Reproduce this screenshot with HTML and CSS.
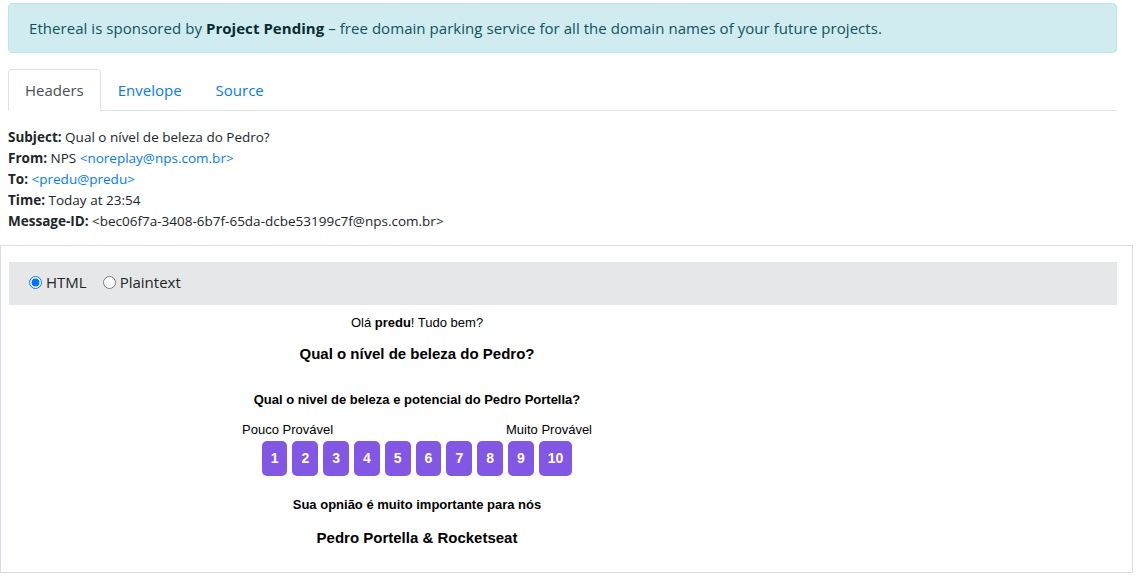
FILE: index.html
```html
<!DOCTYPE html>
<html lang="pt">
<head>
<meta charset="utf-8">
<title>Ethereal message</title>
<link rel="stylesheet" href="styles.css">
</head>
<body>
<div class="page">
  <div class="alert">Ethereal is sponsored by <strong>Project Pending</strong> – free domain parking service for all the domain names of your future projects.</div>
  <ul class="tabs">
    <li class="tab active">Headers</li>
    <li class="tab">Envelope</li>
    <li class="tab">Source</li>
  </ul>
  <div class="headers">
    <div class="hline"><strong>Subject:</strong> Qual o nível de beleza do Pedro?</div>
    <div class="hline"><strong>From:</strong> NPS <a class="link">&lt;noreplay@nps.com.br&gt;</a></div>
    <div class="hline"><strong>To:</strong> <a class="link">&lt;predu@predu&gt;</a></div>
    <div class="hline"><strong>Time:</strong> Today at 23:54</div>
    <div class="hline"><strong>Message-ID:</strong> &lt;bec06f7a-3408-6b7f-65da-dcbe53199c7f@nps.com.br&gt;</div>
  </div>
</div>
<div class="frame">
  <div class="viewbar">
    <label class="opt"><input type="radio" name="view" checked> HTML</label>
    <label class="opt"><input type="radio" name="view"> Plaintext</label>
  </div>
  <div class="mail">
    <p class="greet">Olá <strong>predu</strong>! Tudo bem?</p>
    <h1 class="title">Qual o nível de beleza do Pedro?</h1>
    <h3 class="question">Qual o nivel de beleza e potencial do Pedro Portella?</h3>
    <div class="scale-labels"><span>Pouco Provável</span><span>Muito Provável</span></div>
    <div class="scale">
      <a class="btn">1</a><a class="btn">2</a><a class="btn">3</a><a class="btn">4</a><a class="btn">5</a><a class="btn">6</a><a class="btn">7</a><a class="btn">8</a><a class="btn">9</a><a class="btn">10</a>
    </div>
    <p class="note">Sua opnião é muito importante para nós</p>
    <p class="sign">Pedro Portella &amp; Rocketseat</p>
  </div>
</div>
</body>
</html>
```
FILE: styles.css
```css
html, body {
  margin: 0;
  padding: 0;
  background: #fff;
}
body {
  padding-top: 3px;
  font-family: "Open Sans", "Noto Sans", sans-serif;
  color: #212529;
}
.page {
  margin-left: 8px;
  width: 1109px;
}
.alert {
  box-sizing: border-box;
  height: 50px;
  padding: 12px 20px;
  background: #d1ecf1;
  border: 1px solid #bee5eb;
  border-radius: 4px;
  color: #0c5460;
  font-size: 15px;
  letter-spacing: 0.05px;
  line-height: 24px;
}
.alert strong { color: #062c33; font-weight: 700; }
.tabs {
  list-style: none;
  margin: 16px 0 0;
  padding: 0;
  display: flex;
  border-bottom: 1px solid #dee2e6;
}
.tab {
  padding: 8px 16px;
  margin-bottom: -1px;
  border: 1px solid transparent;
  border-top-left-radius: 4px;
  border-top-right-radius: 4px;
  color: #007bff;
  font-size: 15px;
  line-height: 24px;
}
.tab.active {
  color: #495057;
  background: #fff;
  border-color: #dee2e6 #dee2e6 #fff;
}
.headers {
  margin-top: 16px;
  font-size: 13.5px;
  line-height: 21px;
}
.headers strong { font-weight: 700; }
.link { color: #007bff; text-decoration: none; }
.frame {
  box-sizing: border-box;
  margin-top: 13px;
  width: 1133px;
  height: 328px;
  border: 1px solid #dcdbe5;
  padding: 16px 15px 0 8px;
}
.viewbar {
  height: 43px;
  box-sizing: border-box;
  background: #e6e7e9;
  padding: 0 20px 3px;
  display: flex;
  align-items: center;
  gap: 16px;
  font-size: 15px;
}
.opt {
  display: flex;
  align-items: center;
  gap: 4px;
}
.opt input {
  margin: 0;
  width: 13px;
  height: 13px;
}
.mail {
  margin-left: 233px;
  width: 350px;
  font-family: "Liberation Sans", Arial, sans-serif;
  color: #000;
  text-align: center;
}
.greet {
  margin: 10px 0 0;
  font-size: 13px;
  line-height: 16px;
}
.title {
  margin: 14px 0 0;
  font-size: 15px;
  line-height: 18px;
}
.question {
  margin: 29px 0 0;
  font-size: 13px;
  line-height: 16px;
}
.scale-labels {
  margin-top: 14px;
  display: flex;
  justify-content: space-between;
  font-size: 13px;
  line-height: 16px;
}
.scale {
  margin-top: 3px;
  display: flex;
  justify-content: center;
  gap: 5px;
}
.btn {
  height: 35px;
  padding: 0 9px;
  border-radius: 5px;
  background: #8257e5;
  color: #fff;
  font-weight: 700;
  font-size: 14px;
  line-height: 35px;
}
.note {
  margin: 21px 0 0;
  font-size: 13px;
  line-height: 16px;
  font-weight: 700;
}
.sign {
  margin: 16px 0 0;
  font-size: 15px;
  line-height: 18px;
  font-weight: 700;
}
```
